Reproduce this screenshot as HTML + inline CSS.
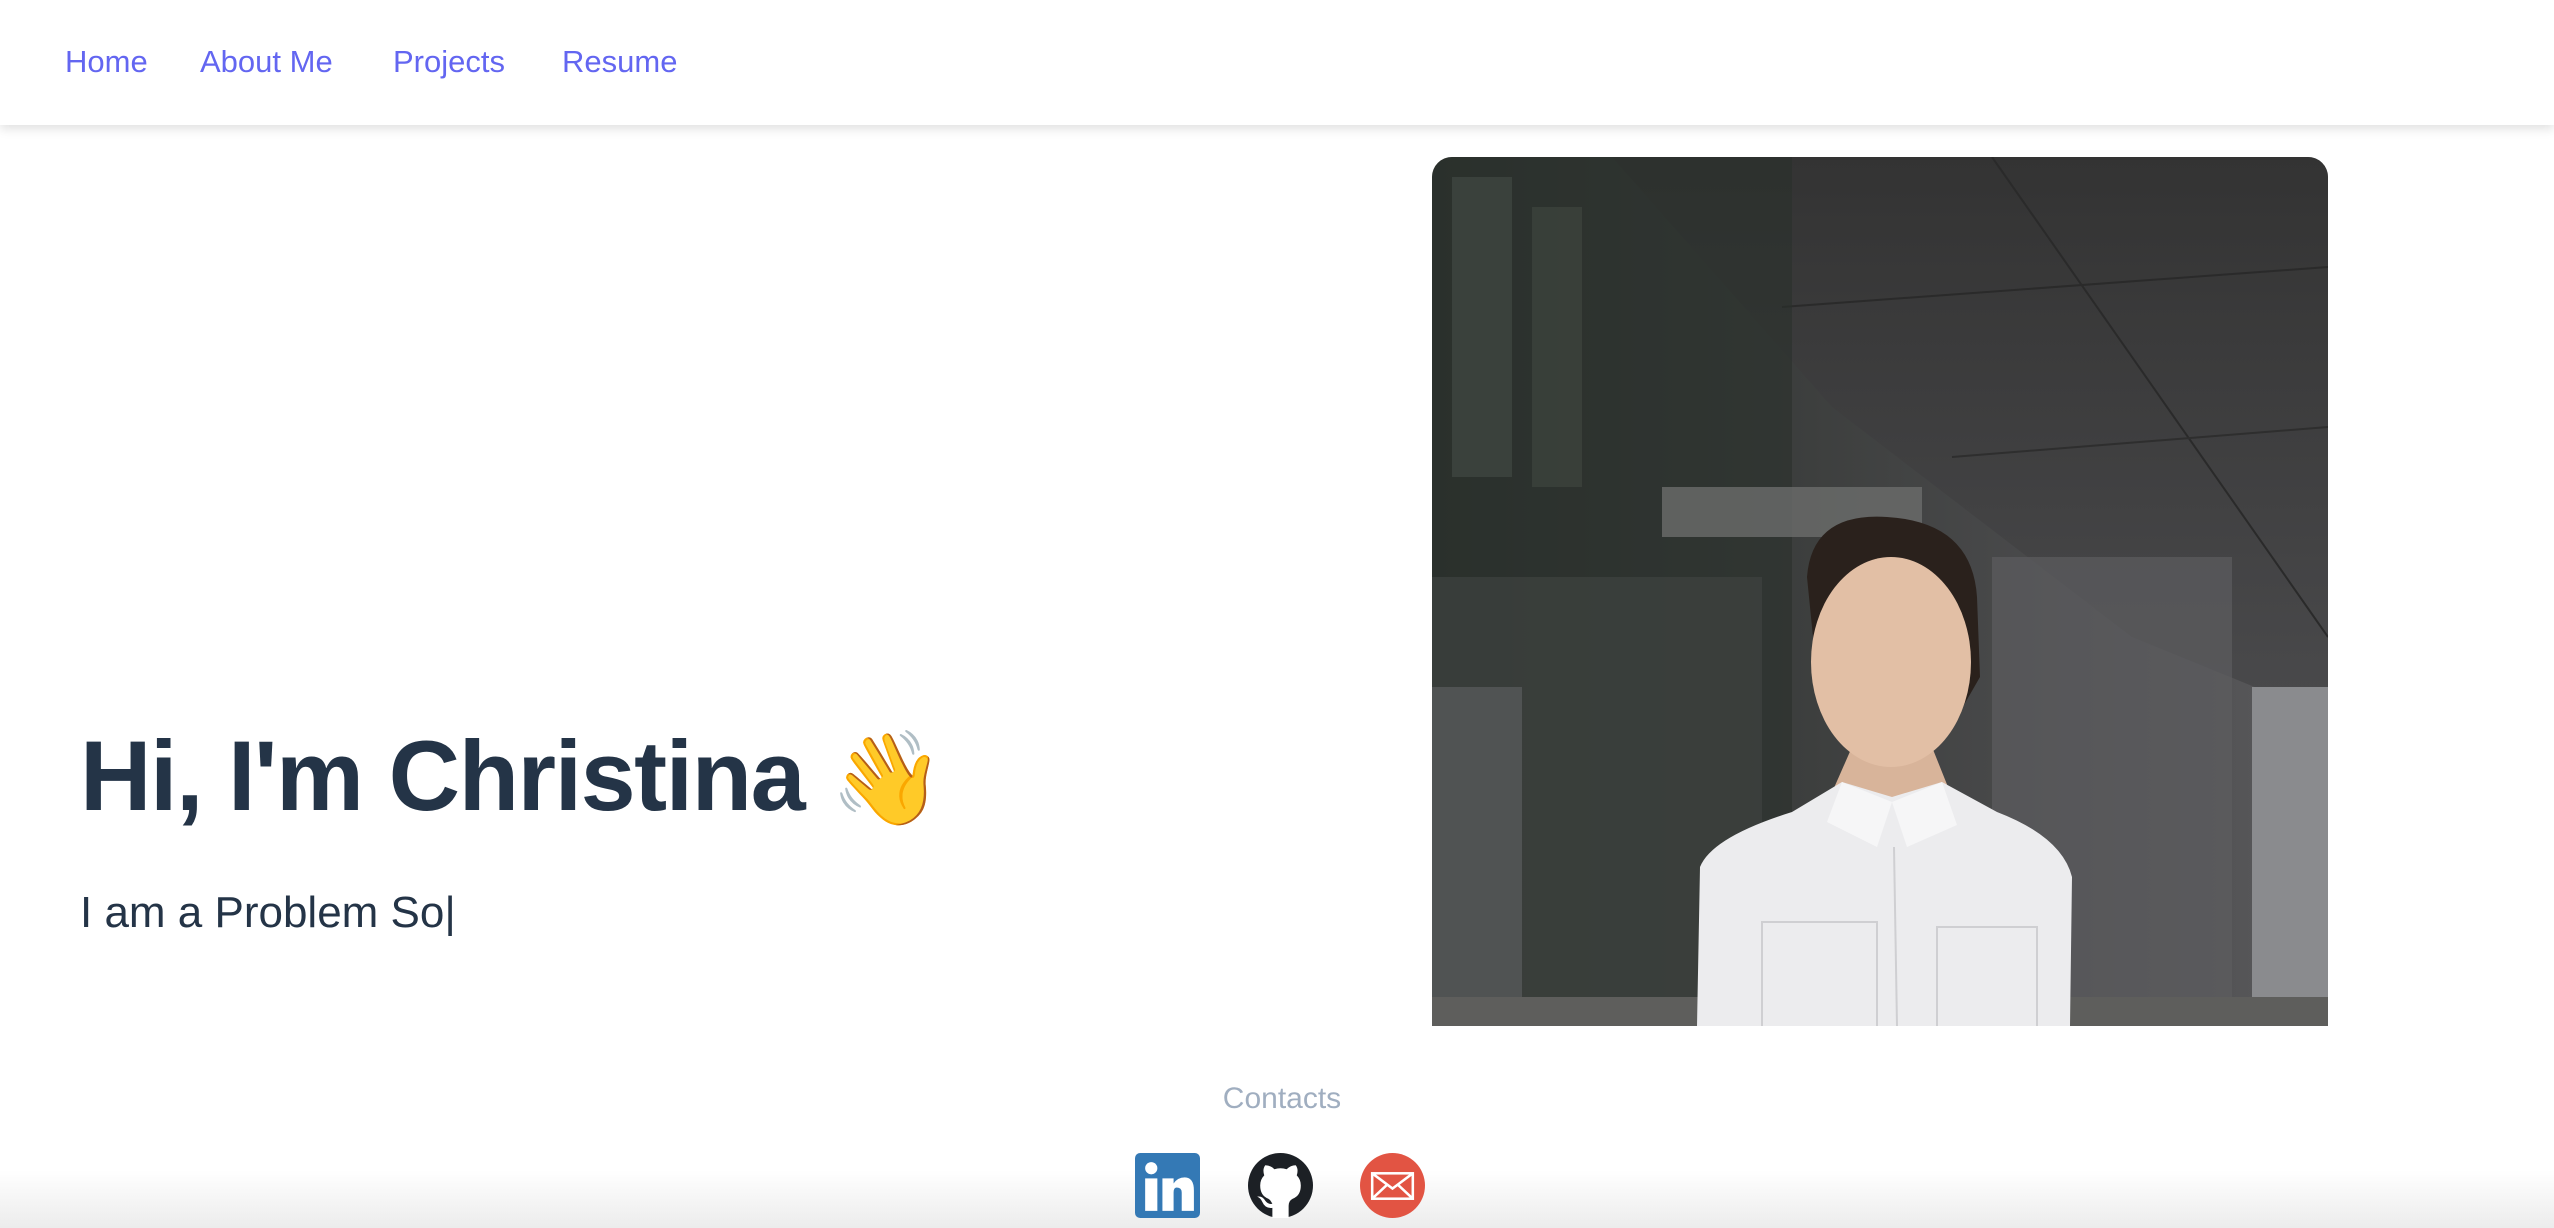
<!DOCTYPE html>
<html><head><meta charset="utf-8">
<style>
html,body{margin:0;padding:0;width:2554px;height:1228px;overflow:hidden;background:#fff;font-family:"Liberation Sans",sans-serif;}
.nav{position:absolute;left:0;top:0;width:2554px;height:125px;background:#fff;box-shadow:0 4px 10px rgba(0,0,0,0.12);z-index:2}
.nav a{position:absolute;top:46px;font-size:31px;color:#6366f1;text-decoration:none;line-height:1}
h1{position:absolute;left:80px;top:726px;margin:0;font-size:99px;font-weight:bold;color:#243447;line-height:1;letter-spacing:-1.5px;white-space:nowrap}
.sub{position:absolute;left:80px;top:891px;font-size:44px;color:#243447;line-height:1;white-space:nowrap}
.photo{position:absolute;left:1432px;top:157px;width:896px;height:869px;border-radius:20px 20px 0 0;overflow:hidden}
.contacts{position:absolute;left:0;width:2564px;top:1082px;text-align:center;font-size:30px;color:#a0aec0}
.foot{position:absolute;left:0;top:1170px;width:2554px;height:58px;background:linear-gradient(#fff,#ececec)}
.ic{position:absolute;top:1153px;width:65px;height:65px}
</style></head><body>
<div class="nav">
<a style="left:65px">Home</a>
<a style="left:200px">About Me</a>
<a style="left:393px">Projects</a>
<a style="left:562px">Resume</a>
</div>
<h1>Hi, I'm Christina <span style="font-family:'Noto Color Emoji','DejaVu Sans',sans-serif;font-size:92px">👋</span></h1>
<div class="sub">I am a Problem So|</div>
<div class="photo">
<svg width="896" height="869" viewBox="0 0 896 869">
<defs>
<linearGradient id="bg" x1="0" y1="0" x2="1" y2="0">
<stop offset="0" stop-color="#2c312e"/><stop offset="0.4" stop-color="#3c3e3d"/><stop offset="0.75" stop-color="#4d4d4f"/><stop offset="1" stop-color="#5a5a5c"/></linearGradient>
<linearGradient id="ce" x1="0" y1="0" x2="0" y2="1"><stop offset="0" stop-color="#333"/><stop offset="1" stop-color="#4a4a4c"/></linearGradient>
</defs>
<rect width="896" height="869" fill="url(#bg)"/>
<polygon points="180,0 896,0 896,560 700,480 400,250" fill="url(#ce)"/>
<line x1="560" y1="0" x2="896" y2="480" stroke="#2a2a2a" stroke-width="2"/>
<line x1="350" y1="150" x2="896" y2="110" stroke="#2a2a2a" stroke-width="2"/>
<line x1="520" y1="300" x2="896" y2="270" stroke="#2e2e2e" stroke-width="2"/>
<rect x="0" y="0" width="360" height="869" fill="#2a302c" opacity="0.6"/>
<rect x="20" y="20" width="60" height="300" fill="#4a524c" opacity="0.5"/>
<rect x="100" y="50" width="50" height="280" fill="#4a524c" opacity="0.4"/>
<rect x="230" y="330" width="260" height="50" fill="#6b6d6b" opacity="0.8"/>
<rect x="0" y="420" width="330" height="450" fill="#3e4340" opacity="0.7"/>
<rect x="0" y="530" width="90" height="340" fill="#56595a" opacity="0.8"/>
<rect x="560" y="400" width="240" height="469" fill="#5c5d60" opacity="0.7"/>
<rect x="820" y="530" width="76" height="339" fill="#8a8b8e"/>
<rect x="0" y="840" width="896" height="29" fill="#5e5e5c"/>
<path d="M375,420 Q380,355 455,360 Q540,365 545,440 L548,520 L525,560 L400,560 L385,520 Z" fill="#2a211c"/>
<path d="M398,640 L420,590 L500,590 L520,640 Z" fill="#d8b49a"/>
<ellipse cx="459" cy="505" rx="80" ry="105" fill="#e2bfa5"/>
<path d="M265,869 L268,710 Q280,680 360,655 L410,625 L460,640 L510,625 L565,655 Q630,680 640,720 L638,869 Z" fill="#ececee"/>
<path d="M410,625 L395,665 L445,690 L460,645 Z M510,625 L525,668 L475,690 L460,645 Z" fill="#f6f6f7"/>
<line x1="462" y1="690" x2="465" y2="869" stroke="#cfcfd2" stroke-width="2"/>
<rect x="330" y="765" width="115" height="110" fill="none" stroke="#cfcfd2" stroke-width="2"/>
<rect x="505" y="770" width="100" height="105" fill="none" stroke="#cfcfd2" stroke-width="2"/>
</svg>
</div>
<div class="foot"></div>
<div class="contacts">Contacts</div>
<svg class="ic" style="left:1135px" viewBox="0 0 64 64"><rect width="64" height="64" rx="5" fill="#3479b5"/><circle cx="16" cy="15" r="6" fill="#fff"/><rect x="10" y="25" width="12" height="32" fill="#fff"/><path d="M27,25 H38 V30 Q42,24 49,24 Q58,24 58,37 V57 H46 V39 Q46,34 41,34 Q38,34 38,39 V57 H27 Z" fill="#fff"/></svg>
<svg class="ic" style="left:1248px" viewBox="0 0 64 64"><circle cx="32" cy="32" r="32" fill="#1c2025"/><path d="M24,64 V54 Q17,55 14,48 Q12,44 9,43 Q14,42 17,47 Q20,51 24,50 Q22,46 20,45 Q12,42 12,32 Q12,26 16,22 Q14,16 17,12 Q22,12 26,16 Q32,14 38,16 Q42,12 47,12 Q50,16 48,22 Q52,26 52,32 Q52,42 44,45 Q40,47 40,52 V64 Z" fill="#fff"/></svg>
<svg class="ic" style="left:1360px" viewBox="0 0 64 64"><circle cx="32" cy="32" r="32" fill="#e25443"/><rect x="12" y="20" width="40" height="25" fill="none" stroke="#fff" stroke-width="2.5"/><path d="M12,20 L32,35 L52,20 M12,45 L27,31 M52,45 L37,31" fill="none" stroke="#fff" stroke-width="2.5"/></svg>
</body></html>
